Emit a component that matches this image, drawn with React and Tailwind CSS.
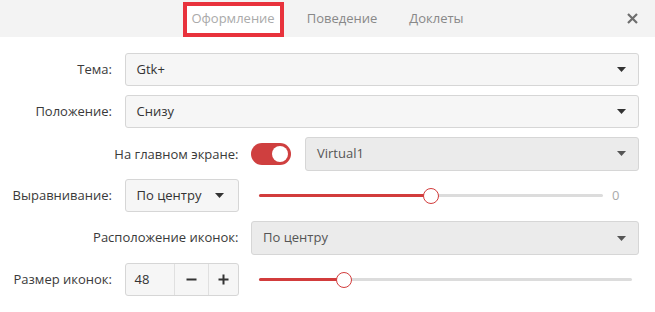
import React from "react";

const font = { fontFamily: '"Open Sans", "Noto Sans", sans-serif' };

function Caret({ color = "#333" }) {
  return (
    <svg width="9" height="5" viewBox="0 0 9 5" className="shrink-0">
      <path d="M0 0 H9 L4.5 5 Z" fill={color} />
    </svg>
  );
}

function Select({ text, disabled, className = "", pr = "pr-3" }) {
  return (
    <div
      className={`flex h-[33px] items-center justify-between rounded-[3px] border border-[#d6d6d6] pl-[11px] ${pr} ${
        disabled ? "bg-[#ebebeb] text-[#555]" : "bg-[#f6f6f6] text-[#333]"
      } ${className}`}
    >
      <span>{text}</span>
      <Caret color={disabled ? "#555" : "#333"} />
    </div>
  );
}

function Slider({ pct, trackEnd }) {
  return (
    <div className="relative h-[16px] flex-1">
      <div className="absolute left-0 right-0 top-[6.5px] h-[3px] rounded-full bg-[#dcdcdc]" />
      <div
        className="absolute left-0 top-[6.5px] h-[3px] rounded-full bg-[#d23c3c]"
        style={{ width: `${pct}%` }}
      />
      <div
        className="absolute top-0 h-[16px] w-[16px] -translate-x-1/2 rounded-full border-[1.5px] border-[#d23c3c] bg-white"
        style={{ left: `${pct}%` }}
      />
    </div>
  );
}

function Label({ children, className = "" }) {
  return (
    <div className={`flex items-center justify-end text-[#3a3a3a] ${className}`}>{children}</div>
  );
}

export default function App() {
  return (
    <div className="h-[312px] w-[655px] bg-white text-[13px]" style={font}>
      <div className="relative flex h-[37px] items-center justify-center bg-[#f3f3f3]">
        <div className="flex items-center">
          <div className="relative flex h-[37px] items-center px-4">
            <div className="absolute bottom-0 left-[8px] right-[7px] top-[2px] border-4 border-[#e8323c] bg-white" />
            <span className="relative text-[#aaaaaa]">Оформление</span>
          </div>
          <div className="flex h-[37px] items-center px-4 text-[#888]">Поведение</div>
          <div className="flex h-[37px] items-center px-4 text-[#888]">Доклеты</div>
        </div>
        <svg
          width="11"
          height="11"
          viewBox="0 0 11 11"
          className="absolute right-[17px] top-[13px]"
        >
          <path d="M1 1 L10 10 M10 1 L1 10" stroke="#6e6e6e" strokeWidth="2.2" />
        </svg>
      </div>

      <div className="grid grid-cols-[112px_114px_1fr] auto-rows-[33px] gap-x-[12.5px] gap-y-[9px] pr-4 pt-4">
        <Label>Тема:</Label>
        <Select text="Gtk+" className="col-span-2" />

        <Label>Положение:</Label>
        <Select text="Снизу" className="col-span-2" />

        <Label className="col-span-2 pt-[2px]">На главном экране:</Label>
        <div className="flex items-center gap-[14px]">
          <div className="flex h-[22px] w-[40px] shrink-0 items-center justify-end rounded-full bg-[#cf3f3f] pr-[3px]">
            <div className="h-[16px] w-[16px] rounded-full bg-white" />
          </div>
          <Select text="Virtual1" disabled className="h-[34px] flex-1" />
        </div>

        <Label>Выравнивание:</Label>
        <Select text="По центру" pr="pr-[14px]" />
        <div className="flex items-center pl-2">
          <Slider pct={50} />
          <span className="ml-[9px] w-[27px] text-[#aaa]">0</span>
        </div>

        <Label className="col-span-2">Расположение иконок:</Label>
        <Select text="По центру" disabled className="h-[34px]" />

        <Label>Размер иконок:</Label>
        <div className="flex h-[33px] overflow-hidden rounded-[3px] border border-[#d6d6d6] bg-[#f6f6f6] text-[#333]">
          <div className="flex w-[48px] items-center pl-[9px]">48</div>
          <div className="flex w-[34px] items-center justify-center border-l border-[#e0e0e0]">
            <svg width="11" height="11" viewBox="0 0 11 11">
              <path d="M0.5 5.5 H10.5" stroke="#333" strokeWidth="2" />
            </svg>
          </div>
          <div className="flex flex-1 items-center justify-center border-l border-[#e0e0e0]">
            <svg width="11" height="11" viewBox="0 0 11 11">
              <path d="M0.5 5.5 H10.5 M5.5 0.5 V10.5" stroke="#333" strokeWidth="2" />
            </svg>
          </div>
        </div>
        <div className="flex items-center pl-2 pr-[7px]">
          <Slider pct={22.8} />
        </div>
      </div>
    </div>
  );
}
